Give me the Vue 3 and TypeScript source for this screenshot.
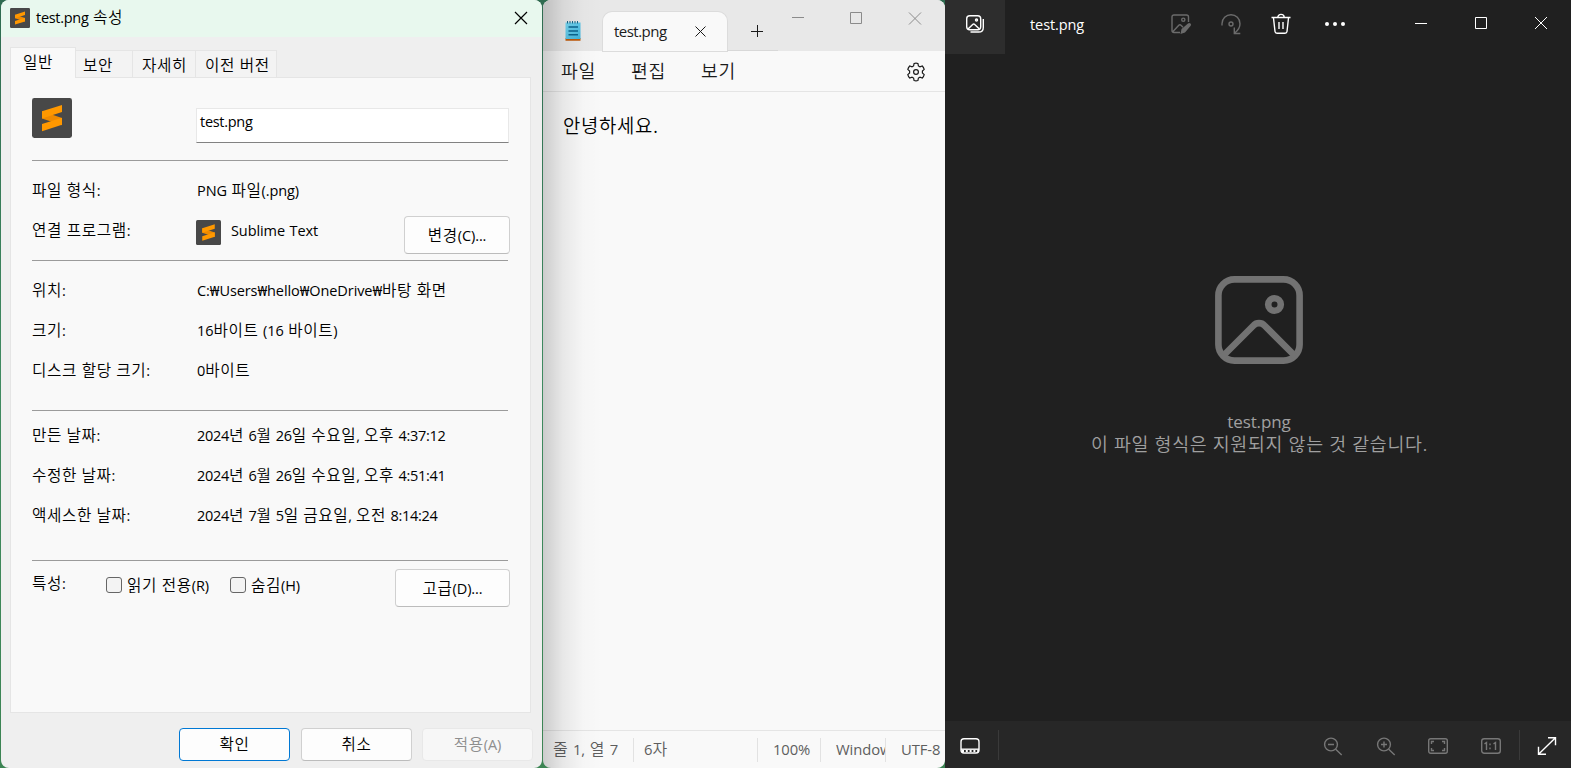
<script setup lang="ts">
import { h } from 'vue'

interface Row {
  label: string
  value: string
}

// Splits mixed text so that Hangul runs get their own size and tracking.
const Txt = (props: { t: string }) =>
  h(
    'span',
    { class: 'txt' },
    props.t
      .split(/([\uAC00-\uD7A3]+)/)
      .filter((s) => s.length > 0)
      .map((s) => (/[\uAC00-\uD7A3]/.test(s) ? h('span', { class: 'ko' }, s) : s)),
  )
Txt.props = ['t']

// Sublime Text logo
const SublimeIcon = () =>
  h('svg', { viewBox: '0 0 40 40', class: 'sublime' }, [
    h('rect', { width: 40, height: 40, rx: 2.4, fill: '#484848' }),
    h('path', { d: 'M10 13.3v7.2l20 6.7v-7.2z', fill: '#ef8a00' }),
    h('path', { d: 'M10 26l20-6.3v7.1L10 33.2z', fill: '#ff9800' }),
    h('path', { d: 'M10 13.3l20-6.4v7.1l-20 6.4z', fill: '#ff9800' }),
  ])

const tabs: string[] = ['일반', '보안', '자세히', '이전 버전']

const places: Row[] = [
  { label: '위치:', value: 'C:₩Users₩hello₩OneDrive₩바탕 화면' },
  { label: '크기:', value: '16바이트 (16 바이트)' },
  { label: '디스크 할당 크기:', value: '0바이트' },
]
const dates: Row[] = [
  { label: '만든 날짜:', value: '2024년 6월 26일 수요일, 오후 4:37:12' },
  { label: '수정한 날짜:', value: '2024년 6월 26일 수요일, 오후 4:51:41' },
  { label: '액세스한 날짜:', value: '2024년 7월 5일 금요일, 오전 8:14:24' },
]
const menus: string[] = ['파일', '편집', '보기']
</script>

<template>
  <main class="desktop">
    <section class="dialog">
      <header class="d-title">
        <SublimeIcon />
        <Txt t="test.png 속성" />
        <svg class="d-close" viewBox="0 0 12 12"><path d="M0 0l12 12M12 0L0 12" /></svg>
      </header>
      <nav class="tabs">
        <div v-for="(t, i) in tabs" :key="t" class="tab" :class="['tab' + i]"><Txt :t="t" /></div>
      </nav>
      <div class="panel">
        <div class="sec head">
          <SublimeIcon />
          <div class="field"><Txt t="test.png" /></div>
        </div>
        <div class="sec kind">
          <div class="row"><Txt class="lab" t="파일 형식:" /><Txt t="PNG 파일(.png)" /></div>
          <div class="row app">
            <Txt class="lab" t="연결 프로그램:" />
            <SublimeIcon />
            <Txt class="appname" t="Sublime Text" />
            <button class="btn change"><Txt t="변경(C)..." /></button>
          </div>
        </div>
        <div class="sec place">
          <div v-for="r in places" :key="r.label" class="row"><Txt class="lab" :t="r.label" /><Txt :t="r.value" /></div>
        </div>
        <div class="sec date">
          <div v-for="r in dates" :key="r.label" class="row"><Txt class="lab" :t="r.label" /><Txt :t="r.value" /></div>
        </div>
        <div class="attrs">
          <Txt class="attr-lab" t="특성:" />
          <i class="box"></i><Txt class="ro" t="읽기 전용(R)" />
          <i class="box"></i><Txt t="숨김(H)" />
          <button class="btn adv"><Txt t="고급(D)..." /></button>
        </div>
      </div>
      <footer class="d-foot">
        <button class="btn ok"><Txt t="확인" /></button>
        <button class="btn"><Txt t="취소" /></button>
        <button class="btn off" disabled><Txt t="적용(A)" /></button>
      </footer>
    </section>

    <section class="notepad">
      <header class="n-head">
        <svg class="n-logo" viewBox="0 0 16 20">
          <defs>
            <linearGradient id="pad" x1="0" y1="0" x2="1" y2="1">
              <stop offset="0" stop-color="#7ad9f3" /><stop offset="1" stop-color="#3fb4dc" />
            </linearGradient>
          </defs>
          <path d="M.5 17h15v2.8H.5z" fill="#c25a08" stroke="none" />
          <path d="M.5 1.5h15V18H.5z" fill="url(#pad)" stroke="none" />
          <path d="M2.5 0v2.5M5 0v2.5M7.5 0v2.5M10 0v2.5M12.5 0v2.5" stroke="#17698c" />
          <path d="M3.5 6h9.5M3.5 10h9.5M3.5 13.7h9.5" stroke="#0b6690" stroke-width="1.5" />
        </svg>
        <div class="n-tab">
          <Txt t="test.png" />
          <svg viewBox="0 0 11 11"><path d="M.5.5l10 10M10.5.5l-10 10" /></svg>
        </div>
        <div class="n-strip">
          <svg viewBox="0 0 12 12"><path d="M6.5 0v12M0 6.5h12" /></svg>
        </div>
        <svg class="n-win" viewBox="0 0 130 13">
          <path d="M0 5.5h12M58.5.5h11v11h-11zM117 .5l12 12M129 .5l-12 12" />
        </svg>
      </header>
      <div class="n-menu">
        <Txt v-for="m in menus" :key="m" :t="m" />
        <svg viewBox="0 0 20 20">
          <path
            d="M8.1 1.5Q10 .9 11.9 1.5L12.4 3.9L14 4.8L16.3 4Q17.7 5.4 18.2 7.4L16.4 9V11L18.2 12.6Q17.7 14.6 16.3 16L14 15.2L12.4 16.1L11.9 18.5Q10 19.1 8.1 18.5L7.6 16.1L6 15.2L3.7 16Q2.3 14.6 1.8 12.6L3.6 11V9L1.8 7.4Q2.3 5.4 3.7 4L6 4.8L7.6 3.9Z"
          />
          <circle cx="10" cy="10" r="2.4" />
        </svg>
      </div>
      <div class="n-body"><Txt t="안녕하세요." /></div>
      <footer class="n-status">
        <div class="s1"><Txt t="줄 1, 열 7" /></div>
        <div class="s2"><Txt t="6자" /></div>
        <div class="s3"><Txt t="100%" /></div>
        <div class="s4"><Txt t="Windows" /></div>
        <div class="s5"><Txt t="UTF-8" /></div>
      </footer>
    </section>

    <section class="viewer">
      <header class="v-head">
        <div class="v-tile">
          <svg viewBox="0 0 20 20">
            <rect x="1.7" y="1.7" width="14" height="14" rx="3" />
            <path d="M3 15l4.7-4.6a1.4 1.4 0 012 0l4.7 4.6M5.5 18h8.2q4.6 0 4.6-4.6V5" />
            <circle cx="11.5" cy="6" r="1" />
          </svg>
        </div>
        <Txt t="test.png" />
        <div class="v-tools">
          <svg class="dim" viewBox="0 0 20 20">
            <path d="M9 18.5H3q-2 0-2-2V3q0-2 2-2h12.5q2 0 2 2V8M2 17.5l5.8-6.3a1.5 1.5 0 012.2 0l2 2" />
            <circle cx="12.3" cy="5.7" r="1.6" />
            <path d="M9.5 20l1-5 6.5-5.5a1.7 1.7 0 012.5 2.5L14 18.5z" fill="#6b6b6b" stroke="none" />
          </svg>
          <svg class="dim" viewBox="0 0 20 20">
            <path d="M1 11.5V9.7a9 9 0 0118 0q0 5-5 9M13.3 13.5v6h6" />
            <circle cx="10" cy="10" r="2" />
          </svg>
          <svg viewBox="0 0 20 20">
            <path d="M.5 3.5h19M6.8 3.2a3.2 2.8 0 016.4 0M2.5 4l1.5 13.5q.2 1.7 2 1.7h8q1.8 0 2-1.7L17.5 4M8 8v7M12 8v7" />
          </svg>
          <svg viewBox="0 0 20 20" class="dots"><circle cx="2" cy="10" r="2" /><circle cx="10" cy="10" r="2" /><circle cx="18" cy="10" r="2" /></svg>
        </div>
        <svg class="v-win" viewBox="0 0 134 14">
          <path d="M1 7.5h12M61.5 1.5h11v11h-11zM121 1l12 12M133 1l-12 12" />
        </svg>
      </header>
      <div class="v-body">
        <svg viewBox="0 0 88 88">
          <rect x="3.4" y="3.4" width="81.2" height="81.2" rx="16" />
          <path d="M8 80L38.5 49.5a7.5 7.5 0 0111 0L80 80" />
          <circle cx="59.5" cy="28.5" r="6.3" />
        </svg>
        <div><Txt t="test.png" /></div>
        <div><Txt t="이 파일 형식은 지원되지 않는 것 같습니다." /></div>
      </div>
      <footer class="v-foot">
        <div class="film">
          <svg viewBox="0 0 20 20">
            <rect x="1" y="2.8" width="18" height="14.2" rx="3" />
            <path d="M1 13.2h18" /><path d="M2 15h17" stroke-dasharray="2 1.8" stroke-width="2" />
          </svg>
        </div>
        <div class="zooms">
          <svg viewBox="0 0 20 20"><circle cx="8" cy="8.5" r="6.4" /><path d="M5 8.5h6M12.7 13.2l6 5.8" /></svg>
          <svg viewBox="0 0 20 20"><circle cx="8" cy="8.5" r="6.4" /><path d="M5 8.5h6M8 5.5v6M12.7 13.2l6 5.8" /></svg>
          <svg viewBox="0 0 20 20"><rect x=".7" y="2.7" width="18.6" height="14.6" rx="2" /><path d="M3.5 8V5.500H6M14 5.500h2.500V8M16.500 12v2.500H14M6 14.500H3.500V12" /></svg>
          <svg viewBox="0 0 20 20"><rect x=".7" y="2.7" width="18.6" height="14.6" rx="2.5" /><path d="M3.500 7.800L5.500 6.500v7.500M12.500 7.800l2-1.300v7.500M9 7.500v1.800M9 11.500v1.800" /></svg>
        </div>
        <div class="full">
          <svg viewBox="0 0 20 20"><path d="M11 1.800h7.500v7.500M1.500 10.800v7.500H9M18.200 2L1.800 18" /></svg>
        </div>
      </footer>
    </section>
  </main>
</template>

<style>
html,
body {
  margin: 0;
  overflow: hidden;
}
.txt {
  white-space: pre;
  word-spacing: 0.06em;
  letter-spacing: -0.006em;
}
.txt .ko {
  font-family: 'Noto Sans CJK KR', sans-serif;
  font-weight: 350;
  font-size: 1.08em;
  letter-spacing: 0.04em;
  line-height: 0;
}
svg.sublime {
  display: block;
  flex: none;
  stroke: none;
}
</style>

<style scoped>
* {
  box-sizing: border-box;
}
.desktop {
  width: 1571px;
  height: 768px;
  padding-left: 1px;
  display: flex;
  overflow: hidden;
  background: linear-gradient(#2f6b50 0, #3f8a60 370px, #3c8453 768px);
  font: 400 14.5px/20px 'Open Sans', 'Noto Sans', 'Noto Sans CJK KR', sans-serif;
  color: #000;
}
svg:not(.sublime) {
  display: block;
  flex: none;
  fill: none;
  stroke: currentColor;
}

/* properties dialog */
.dialog {
  width: 541px;
  margin-right: 1px;
  border-radius: 8px;
  background: #efefef;
  display: flex;
  flex-direction: column;
  overflow: hidden;
}
.d-title {
  height: 37px;
  flex: none;
  background: #e8f8ee;
  display: flex;
  align-items: center;
  padding: 0 15px 1px 9px;
  gap: 6px;
}
.d-title .sublime {
  width: 20px;
  height: 20px;
}
.d-title .txt,
.field .txt {
  letter-spacing: -0.02em;
}
.d-close {
  width: 12px;
  height: 12px;
  margin-left: auto;
  overflow: visible;
  stroke-width: 1.2;
}
.tabs {
  height: 40px;
  flex: none;
  padding-left: 9px;
  display: flex;
  align-items: flex-end;
}
.tab {
  height: 27px;
  background: #f3f3f3;
  border: 1px solid #e5e5e5;
  border-width: 1px 1px 0 0;
  padding: 5px 0 0 7px;
}
.tab0 {
  width: 66px;
  height: 31px;
  margin-bottom: -1px;
  background: #f9f9f9;
  border-left-width: 1px;
  padding: 5px 0 0 12px;
  z-index: 1;
}
.tab1 {
  width: 57px;
}
.tab2 {
  width: 63px;
  padding-left: 9px;
}
.tab3 {
  width: 81px;
  padding-left: 9px;
}
.panel {
  height: 636px;
  flex: none;
  margin: 0 11px 0 9px;
  padding: 0 21px;
  border: 1px solid #e5e5e5;
  background: #f9f9f9;
}
.sec {
  width: 476px;
  border-bottom: 1px solid #9b9b9b;
}
.head {
  height: 83px;
  padding-top: 20px;
  display: flex;
}
.head .sublime {
  width: 40px;
  height: 40px;
}
.field {
  width: 313px;
  height: 35px;
  margin: 10px -1px 0 124px;
  padding: 3px;
  background: #fff;
  border: 1px solid #e8e8e8;
  border-bottom-color: #828282;
}
.kind {
  height: 100px;
  padding-top: 9px;
}
.place {
  height: 150px;
  padding-top: 9px;
}
.date {
  height: 150px;
  padding-top: 4px;
}
.date .txt {
  letter-spacing: -0.02em;
}
.row {
  height: 40px;
  padding-top: 2px;
  display: flex;
  align-items: center;
}
.lab {
  width: 165px;
  flex: none;
}
.app .sublime {
  width: 25px;
  height: 25px;
  margin: 3px 10px 0 -1px;
}
.btn {
  height: 38px;
  flex: none;
  margin: 0;
  padding: 0;
  font: inherit;
  color: #000;
  background: #fdfdfd;
  border: 1px solid #d0d0d0;
  border-bottom-color: #bcbcbc;
  border-radius: 4px;
}
.change {
  width: 106px;
  margin: 8px -2px 0 auto;
  padding-top: 1px;
}
.attrs {
  width: 478px;
  padding-top: 8px;
  display: flex;
}
.attr-lab {
  width: 74px;
  padding-top: 5px;
}
.attrs .txt:not(.attr-lab) {
  padding-top: 7px;
}
.box {
  width: 16px;
  height: 16px;
  margin: 8px 5px 0 0;
  background: #f3f3f3;
  border: 1px solid #666;
  border-radius: 3px;
}
.ro {
  width: 103px;
}
.adv {
  width: 115px;
  margin-left: auto;
  padding-top: 1px;
}
.attrs .btn .txt {
  padding: 0;
}
.d-foot {
  padding: 15px 9px 0;
  display: flex;
  justify-content: flex-end;
  gap: 11px;
}
.d-foot .btn {
  width: 111px;
  height: 33px;
}
.d-foot .ok {
  border-color: #0078d4;
}
.d-foot .off {
  margin-left: -1px;
  color: #8e8e8e;
  background: #f7f7f7;
  border-color: #e8e8e8;
}

/* text editor */
.notepad {
  position: relative;
  width: 402px;
  border-radius: 8px;
  background: #f9f9f9;
  color: #1b1b1b;
  overflow: hidden;
  display: flex;
  flex-direction: column;
}
.notepad::after {
  content: '';
  position: absolute;
  inset: 0 auto 0 0;
  width: 60px;
  background: linear-gradient(90deg, rgba(0, 0, 0, 0.18), rgba(0, 0, 0, 0.07) 20px, rgba(0, 0, 0, 0.015) 40px, transparent);
}
.n-head {
  height: 51px;
  flex: none;
  background: #e8e8e8;
  display: flex;
  padding-left: 22px;
}
.n-logo {
  width: 16px;
  height: 20px;
  margin-top: 21px;
}
.n-tab {
  width: 124px;
  margin: 12px 0 0 22px;
  padding: 0 21px 1px 11px;
  background: #f9f9f9;
  border-radius: 9px 9px 0 0;
  box-shadow: 0 0 0 1px #dcdcdc;
  display: flex;
  align-items: center;
  justify-content: space-between;
  font-weight: 500;
  font-size: 15px;
}
.n-tab .txt {
  letter-spacing: -0.035em;
}
.n-tab svg {
  width: 11px;
  height: 11px;
}
.n-strip {
  width: 51px;
  border-bottom: 1px solid #d8d8d8;
  padding: 25px 0 0 24px;
}
.n-strip svg {
  width: 12px;
  height: 12px;
}
.n-win {
  width: 130px;
  height: 13px;
  margin: 12px 0 0 14px;
  color: #8b8b8b;
}
.n-menu {
  height: 41px;
  flex: none;
  padding: 1px 19px 0 18px;
  border-bottom: 1px solid #e5e5e5;
  display: flex;
  align-items: center;
  gap: 35px;
  font-size: 16.9px;
}
.n-menu svg {
  width: 20px;
  height: 20px;
  margin-left: auto;
  stroke-width: 1.2;
}
.n-body {
  flex: 1;
  padding: 24px 20px 0;
  font-size: 17.4px;
  color: #000;
}
.n-status {
  height: 38px;
  padding-top: 1px;
  border-top: 1px solid #e5e5e5;
  display: flex;
  align-items: center;
  color: #5e5e5e;
  font-size: 14.8px;
}
.n-status div {
  height: 24px;
  line-height: 23px;
  overflow: hidden;
  border-right: 1px solid #e2e2e2;
}
.n-status .s1 {
  width: 91px;
  padding-left: 10px;
}
.n-status .s2 {
  width: 124px;
  padding-left: 10px;
}
.n-status .s3 {
  width: 63px;
  padding-left: 15px;
}
.n-status .s4 {
  width: 65px;
  padding-left: 15px;
}
.n-status .s5 {
  flex: 1;
  padding-left: 15px;
  border: 0;
}

/* image viewer */
.viewer {
  width: 626px;
  flex: none;
  background: #202020;
  color: #fff;
  display: flex;
  flex-direction: column;
}
.v-head {
  height: 54px;
  display: flex;
}
.v-tile {
  width: 60px;
  padding: 14px 0 0 20px;
  margin-right: 25px;
  background: #2d2d2d;
}
.v-tile svg {
  width: 20px;
  height: 20px;
  stroke-width: 1.4;
}
.v-head > .txt {
  width: 141px;
  padding-top: 15px;
}
.v-tools {
  display: flex;
  gap: 30px;
  padding-top: 14px;
}
.v-tools svg {
  width: 20px;
  height: 20px;
  stroke-width: 1.4;
  overflow: visible;
}
.v-tools .dim {
  color: #6b6b6b;
}
.v-tools svg.dots {
  margin-left: 4px;
  fill: #fff;
  stroke: none;
}
.v-win {
  width: 134px;
  height: 14px;
  margin: 16px 0 0 69px;
}
.v-body {
  flex: 1;
  padding: 222px 0 0 2px;
  text-align: center;
  color: #a0a0a0;
  font-size: 17px;
  line-height: 23px;
}
.v-body svg {
  width: 88px;
  height: 88px;
  margin: 0 auto 46px;
  color: #727272;
  stroke-width: 6.6;
}
.v-foot {
  height: 47px;
  background: #272727;
  display: flex;
  align-items: center;
}
.v-foot svg {
  width: 20px;
  height: 20px;
  stroke-width: 1.4;
}
.film {
  width: 54px;
  height: 30px;
  padding: 6px 0 0 15px;
  border-right: 1px solid #3a3a3a;
}
.zooms {
  margin-left: auto;
  height: 30px;
  padding: 6px 18px 0 0;
  display: flex;
  gap: 32.6px;
  color: #777;
  border-right: 1px solid #3a3a3a;
}
.full {
  width: 51px;
  height: 30px;
  padding: 6px 0 0 17px;
}
</style>
